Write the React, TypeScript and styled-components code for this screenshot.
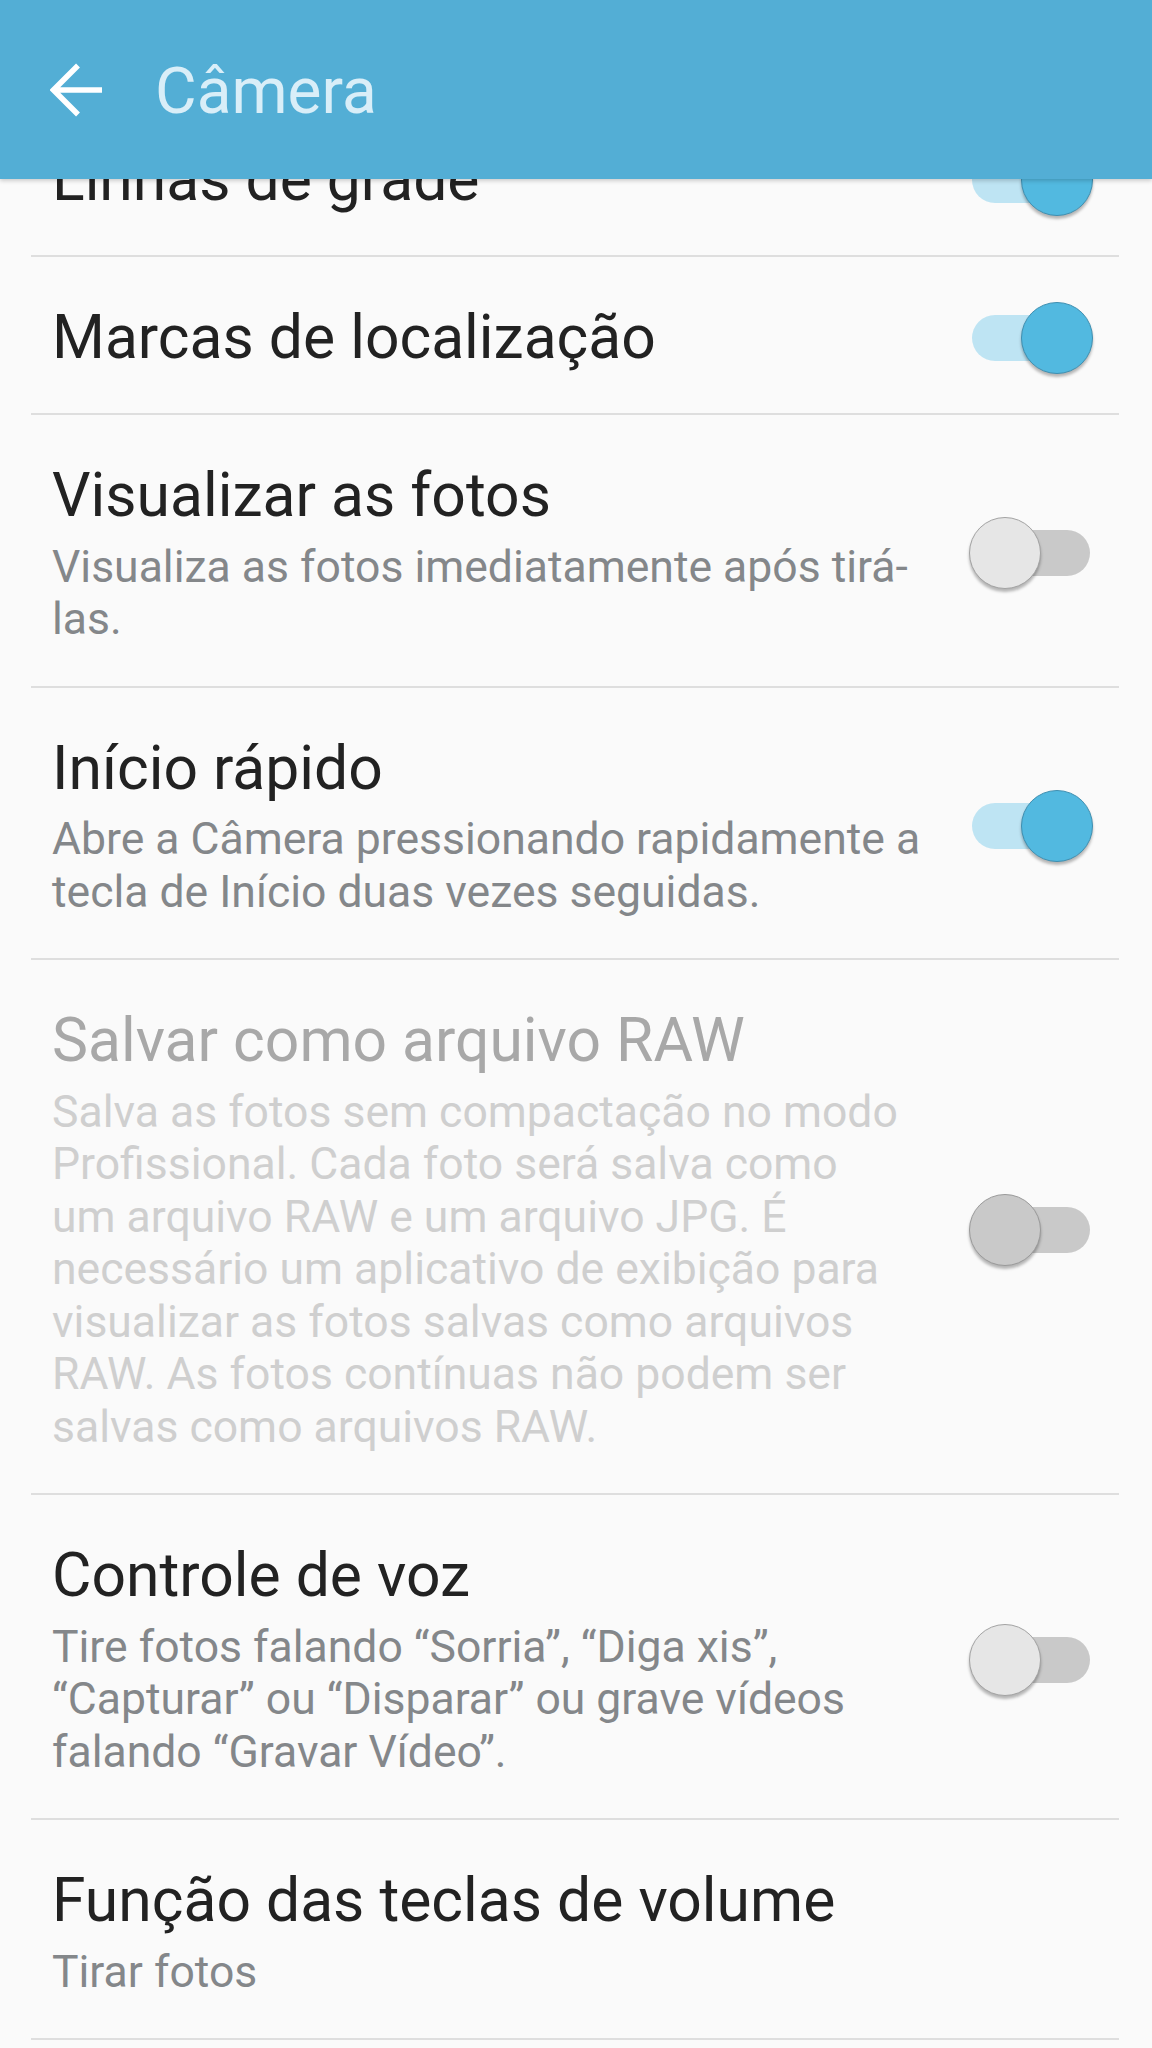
import React from "react";
import styled, { createGlobalStyle } from "styled-components";

const GlobalStyle = createGlobalStyle`
  html, body {
    margin: 0;
    padding: 0;
    background: #fafafa;
  }
  body {
    font-family: Roboto, "Noto Sans", "Liberation Sans", sans-serif;
    -webkit-font-smoothing: antialiased;
  }
`;

const Page = styled.div`
  width: 1152px;
  min-height: 2048px;
  background: #fafafa;
  position: relative;
  overflow: hidden;
`;

const AppBar = styled.header`
  position: fixed;
  top: 0;
  left: 0;
  right: 0;
  height: 179px;
  z-index: 10;
  background: #53aed5;
  display: flex;
  align-items: center;
  padding-left: 50px;
  gap: 51px;
  box-shadow: 0 2px 4px rgba(0, 0, 0, 0.18);
`;

const BackButton = styled.button`
  border: none;
  background: transparent;
  padding: 0;
  width: 54px;
  height: 54px;
  display: flex;
  align-items: center;
  justify-content: center;
  cursor: pointer;
`;

const AppTitle = styled.h1`
  margin: 0;
  font-size: 64px;
  font-weight: 400;
  color: #d9eef8;
  line-height: 1;
  margin-top: 4px;
`;

const List = styled.div`
  margin: 99px 33px 0 31px;
  display: flex;
  flex-direction: column;
`;

const Row = styled.div`
  display: flex;
  align-items: center;
  padding: 46px 26px 40px 21px;
  border-bottom: 2px solid #dedede;
  gap: 24px;
`;

const TextBlock = styled.div`
  flex: 1;
  display: flex;
  flex-direction: column;
  gap: 9.5px;
  min-width: 0;
`;

const Title = styled.div<{ $disabled?: boolean }>`
  font-size: 60.6px;
  line-height: 70px;
  color: ${(p) => (p.$disabled ? "#a8a8a8" : "#222222")};
  white-space: nowrap;
`;

const Summary = styled.div<{ $disabled?: boolean }>`
  font-size: 44.5px;
  line-height: 52.5px;
  color: ${(p) => (p.$disabled ? "#cfcfcf" : "#84878a")};
`;

const SummaryLine = styled.span`
  display: block;
  white-space: nowrap;
`;

const SwitchBox = styled.div`
  position: relative;
  width: 124px;
  height: 72px;
  margin: -4px 0;
  flex-shrink: 0;
`;

const Track = styled.div<{ $on: boolean }>`
  margin: 13px 0 0 3px;
  width: 118px;
  height: 46px;
  border-radius: 23px;
  background: ${(p) => (p.$on ? "#bee4f3" : "#c9c9c9")};
`;

const Thumb = styled.div<{ $on: boolean; $disabled?: boolean }>`
  position: absolute;
  top: 0;
  left: ${(p) => (p.$on ? "52px" : "0")};
  width: 72px;
  height: 72px;
  box-sizing: border-box;
  border-radius: 50%;
  background: ${(p) =>
    p.$on ? "#52b9e0" : p.$disabled ? "#c9c9c9" : "#e6e6e6"};
  border: 1.5px solid
    ${(p) => (p.$on ? "#3e8fb1" : p.$disabled ? "#9a9a9a" : "#a3a3a3")};
  box-shadow: 0 3px 3px rgba(0, 0, 0, 0.28);
`;

type Item = {
  title: string;
  lines?: string[];
  on?: boolean;
  disabled?: boolean;
  hasSwitch: boolean;
};

const items: Item[] = [
  { title: "Linhas de grade", on: true, hasSwitch: true },
  { title: "Marcas de localização", on: true, hasSwitch: true },
  {
    title: "Visualizar as fotos",
    lines: ["Visualiza as fotos imediatamente após tirá-", "las."],
    on: false,
    hasSwitch: true,
  },
  {
    title: "Início rápido",
    lines: [
      "Abre a Câmera pressionando rapidamente a",
      "tecla de Início duas vezes seguidas.",
    ],
    on: true,
    hasSwitch: true,
  },
  {
    title: "Salvar como arquivo RAW",
    lines: [
      "Salva as fotos sem compactação no modo",
      "Profissional. Cada foto será salva como",
      "um arquivo RAW e um arquivo JPG. É",
      "necessário um aplicativo de exibição para",
      "visualizar as fotos salvas como arquivos",
      "RAW. As fotos contínuas não podem ser",
      "salvas como arquivos RAW.",
    ],
    on: false,
    disabled: true,
    hasSwitch: true,
  },
  {
    title: "Controle de voz",
    lines: [
      "Tire fotos falando “Sorria”, “Diga xis”,",
      "“Capturar” ou “Disparar” ou grave vídeos",
      "falando “Gravar Vídeo”.",
    ],
    on: false,
    hasSwitch: true,
  },
  {
    title: "Função das teclas de volume",
    lines: ["Tirar fotos"],
    hasSwitch: false,
  },
];

const BackArrow = () => (
  <svg width="54" height="54" viewBox="0 0 54 54" fill="none">
    <path
      d="M4 27 H52 M28 2.5 L3.5 27 L28 51.5"
      stroke="#ffffff"
      strokeWidth="5.5"
      strokeLinejoin="miter"
    />
  </svg>
);

const Toggle = ({ on, disabled }: { on: boolean; disabled?: boolean }) => (
  <SwitchBox>
    <Track $on={on} />
    <Thumb $on={on} $disabled={disabled} />
  </SwitchBox>
);

export default function App() {
  return (
    <Page>
      <GlobalStyle />
      <AppBar>
        <BackButton aria-label="Voltar">
          <BackArrow />
        </BackButton>
        <AppTitle>Câmera</AppTitle>
      </AppBar>
      <List>
        {items.map((it) => (
          <Row key={it.title}>
            <TextBlock>
              <Title $disabled={it.disabled}>{it.title}</Title>
              {it.lines && (
                <Summary $disabled={it.disabled}>
                  {it.lines.map((l) => (
                    <SummaryLine key={l}>{l}</SummaryLine>
                  ))}
                </Summary>
              )}
            </TextBlock>
            {it.hasSwitch && <Toggle on={!!it.on} disabled={it.disabled} />}
          </Row>
        ))}
      </List>
    </Page>
  );
}
